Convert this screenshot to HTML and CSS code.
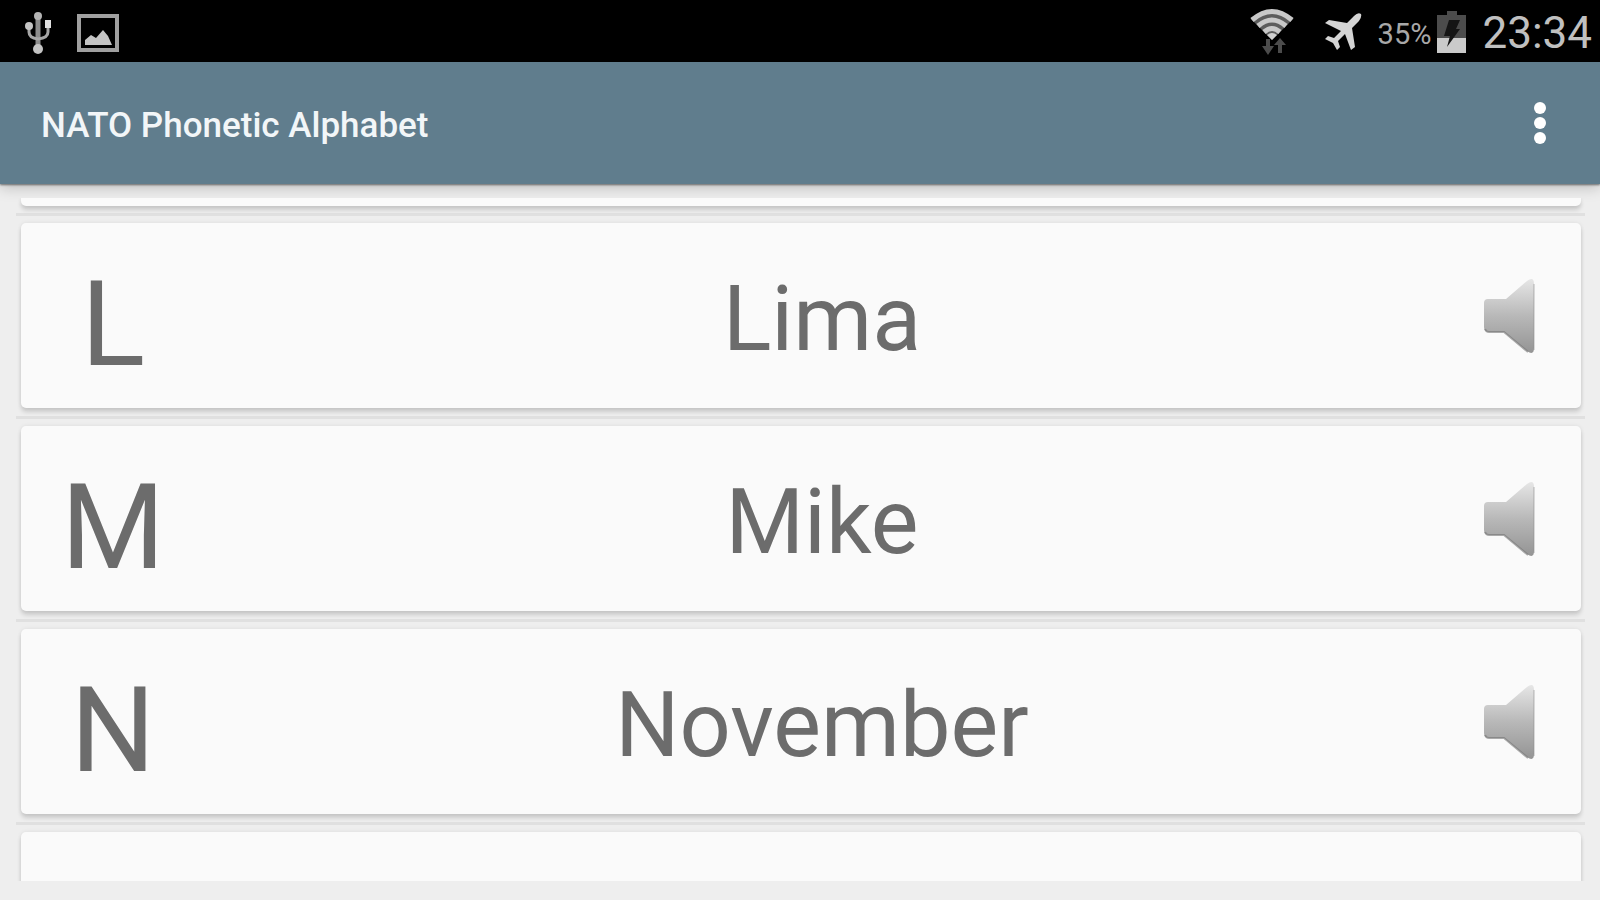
FILE: index.html
```html
<!DOCTYPE html>
<html lang="en">
<head>
    <meta charset="UTF-8">
    <title>NATO Phonetic Alphabet</title>
    <link rel="stylesheet" href="styles.css">
</head>
<body>
<svg width="0" height="0" class="defs" aria-hidden="true">
    <defs>
        <linearGradient id="metal" x1="0" y1="0" x2="0" y2="1">
            <stop offset="0" stop-color="#e6e6e6"/>
            <stop offset="0.5" stop-color="#b8b8b8"/>
            <stop offset="1" stop-color="#949494"/>
        </linearGradient>
        <symbol id="speaker" viewBox="0 0 56 80">
            <path d="M6 23 Q2 23 2 27 V51 Q2 56 7 56 H22 L45 75 Q52 80 52 72 V8 Q52 0 45 5 L24 23 Z" fill="url(#metal)"/>
            <path d="M3 53 Q4 56 7 56 H22 L46 76" fill="none" stroke="#747474" stroke-width="2" opacity="0.6"/>
            <path d="M52 8 V74" stroke="#8c8c8c" stroke-width="1" opacity="0.6"/>
        </symbol>
    </defs>
</svg>
<div id="status">
    <div class="left">
        <svg width="28" height="44" viewBox="0 0 28 44">
            <path d="M14 6 V38" stroke="#8c8c8c" stroke-width="5"/>
            <path d="M5 16 V21 Q5 27 14 28 Q24 27 24 21 V14" fill="none" stroke="#a6a6a6" stroke-width="3"/>
            <circle cx="14" cy="5" r="4" fill="#b4b4b4"/>
            <circle cx="5" cy="15" r="4" fill="#c4c4c4"/>
            <rect x="21" y="9" width="6" height="8" fill="#e0e0e0"/>
            <circle cx="14" cy="38" r="5" fill="#c4c4c4"/>
        </svg>
        <svg width="42" height="38" viewBox="0 0 42 38">
            <rect x="2" y="2" width="38" height="34" fill="none" stroke="#a0a0a0" stroke-width="4"/>
            <path d="M8 31 V26 L14 21 L19 24 L26 16 L31 22 L35 31 Z" fill="#c4c4c4"/>
        </svg>
    </div>
    <div class="right">
        <svg class="wifi" width="44" height="48" viewBox="0 0 44 48">
            <path d="M1 11 Q22 -7 43 11 L22 32 Z" fill="#5c5c5c"/>
            <g fill="none" stroke="#c8c8c8" stroke-width="5">
                <path d="M2 12 Q22 -5 42 12"/>
                <path d="M8 18 Q22 6 36 18"/>
                <path d="M14 24 Q22 17 30 24"/>
            </g>
            <path d="M17 27 Q22 23 27 27 L22 32 Z" fill="#d0d0d0"/>
            <path d="M16 31 H20 V38 H24 L18 47 L12 38 H16 Z" fill="#4c4c4c"/>
            <path d="M28 45 H32 V37 H36 L30 30 L24 37 H28 Z" fill="#4c4c4c"/>
        </svg>
        <svg class="plane" width="38" height="38" viewBox="0 0 38 38">
            <path d="M37 1 Q34 -1 30 3 L23 10 L5 7 L1 10 L17 18 L10 25 L4 23 L1 26 L9 30 L13 37 L16 34 L14 28 L21 21 L27 37 L31 34 L28 15 L35 8 Q38 4 37 1 Z" fill="#d4d4d4"/>
        </svg>
        <span class="percent">35%</span>
        <svg class="battery" width="29" height="42" viewBox="0 0 29 42">
            <path d="M0 4 H10 V0 H20 V4 H29 V28 H0 Z" fill="#4c4c4c"/>
            <path d="M0 27 H29 V42 H0 Z" fill="#cacaca"/>
            <path d="M12 9 H23 L19 18 H23 L10 36 L13 25 H7 Z" fill="#151515"/>
        </svg>
        <span class="time">23:34</span>
    </div>
</div>
<div id="toolbar">
    <h1>NATO Phonetic Alphabet</h1>
    <button type="button" aria-label="More options">
        <svg width="14" height="44" viewBox="0 0 14 44">
            <circle cx="7" cy="7" r="6"/>
            <circle cx="7" cy="22" r="6"/>
            <circle cx="7" cy="37" r="6"/>
        </svg>
    </button>
</div>
<ul id="list">
    <li class="first"><div class="card"></div></li>
    <li>
        <div class="card">
            <span class="letter">L</span>
            <span class="word">Lima</span>
            <button type="button" aria-label="Play Lima"><svg width="56" height="80"><use href="#speaker"/></svg></button>
        </div>
    </li>
    <li>
        <div class="card">
            <span class="letter">M</span>
            <span class="word">Mike</span>
            <button type="button" aria-label="Play Mike"><svg width="56" height="80"><use href="#speaker"/></svg></button>
        </div>
    </li>
    <li>
        <div class="card">
            <span class="letter">N</span>
            <span class="word">November</span>
            <button type="button" aria-label="Play November"><svg width="56" height="80"><use href="#speaker"/></svg></button>
        </div>
    </li>
    <li class="last"><div class="card"></div></li>
</ul>
</body>
</html>
```
FILE: styles.css
```css
*{
    box-sizing: border-box;
}
body{
    margin: 0;
    height: 100vh;
    display: flex;
    flex-direction: column;
    background: #eee;
    font-family: Roboto, "Liberation Sans", sans-serif;
    overflow: hidden;
}
.defs{
    position: absolute;
}
button{
    border: 0;
    padding: 0;
    background: none;
    display: flex;
    align-items: center;
    justify-content: center;
    cursor: pointer;
}

/* status bar */
#status{
    flex: none;
    height: 62px;
    padding: 0 8px 0 24px;
    display: flex;
    align-items: center;
    justify-content: space-between;
    background: #000;
}
#status .left,#status .right{
    display: flex;
    align-items: center;
}
#status .left{
    gap: 25px;
    padding-top: 4px;
}
#status .right{
    padding-top: 2px;
}
.wifi{
    margin-right: 30px;
}
.plane{
    margin-right: 16px;
}
.percent{
    margin-right: 6px;
    color: #a8a8a8;
    font-size: 29px;
    padding-top: 4px;
}
.battery{
    margin-right: 16px;
}
.time{
    color: #c0c0c0;
    font-size: 44px;
    padding-top: 2px;
}

/* toolbar */
#toolbar{
    flex: none;
    height: 122px;
    padding: 0 32px 0 41px;
    display: flex;
    align-items: center;
    justify-content: space-between;
    background: #607d8d;
    box-shadow: 0 1px 2px rgba(0,0,0,0.5), 0 3px 14px rgba(0,0,0,0.22);
}
#toolbar h1{
    margin: 0;
    padding-top: 4px;
    color: #f2f6f8;
    font-size: 35px;
    font-weight: 500;
}
#toolbar button{
    width: 56px;
    height: 56px;
}
#toolbar circle{
    fill: #fff;
}

/* list of cards */
#list{
    flex: 1;
    min-height: 0;
    margin: 14px 15px 19px 16px;
    padding: 0;
    list-style: none;
    display: flex;
    flex-direction: column;
    overflow: hidden;
}
#list li{
    flex: none;
    padding: 7px 4px 8px 5px;
    border-bottom: 3px solid #e0e0e0;
}
.card{
    min-height: 185px;
    display: flex;
    align-items: stretch;
    background: #fafafa;
    border-radius: 5px;
    box-shadow: 0 4px 4px rgba(0,0,0,0.14), 0 0 4px rgba(0,0,0,0.08);
}
#list .first{
    padding-top: 0;
    padding-bottom: 7px;
}
.first .card{
    min-height: 8px;
    border-radius: 0 0 5px 5px;
}
#list .last{
    flex: 1;
    padding-bottom: 0;
    border: 0;
}
.letter,.word{
    display: flex;
    align-items: center;
    justify-content: center;
    color: #6c6c6c;
}
.letter{
    width: 184px;
    padding-top: 19px;
    font-size: 119px;
    line-height: 140px;
}
.word{
    flex: 1;
    padding-top: 8px;
    font-size: 90px;
    line-height: 106px;
}
.card button{
    width: 142px;
}
```
